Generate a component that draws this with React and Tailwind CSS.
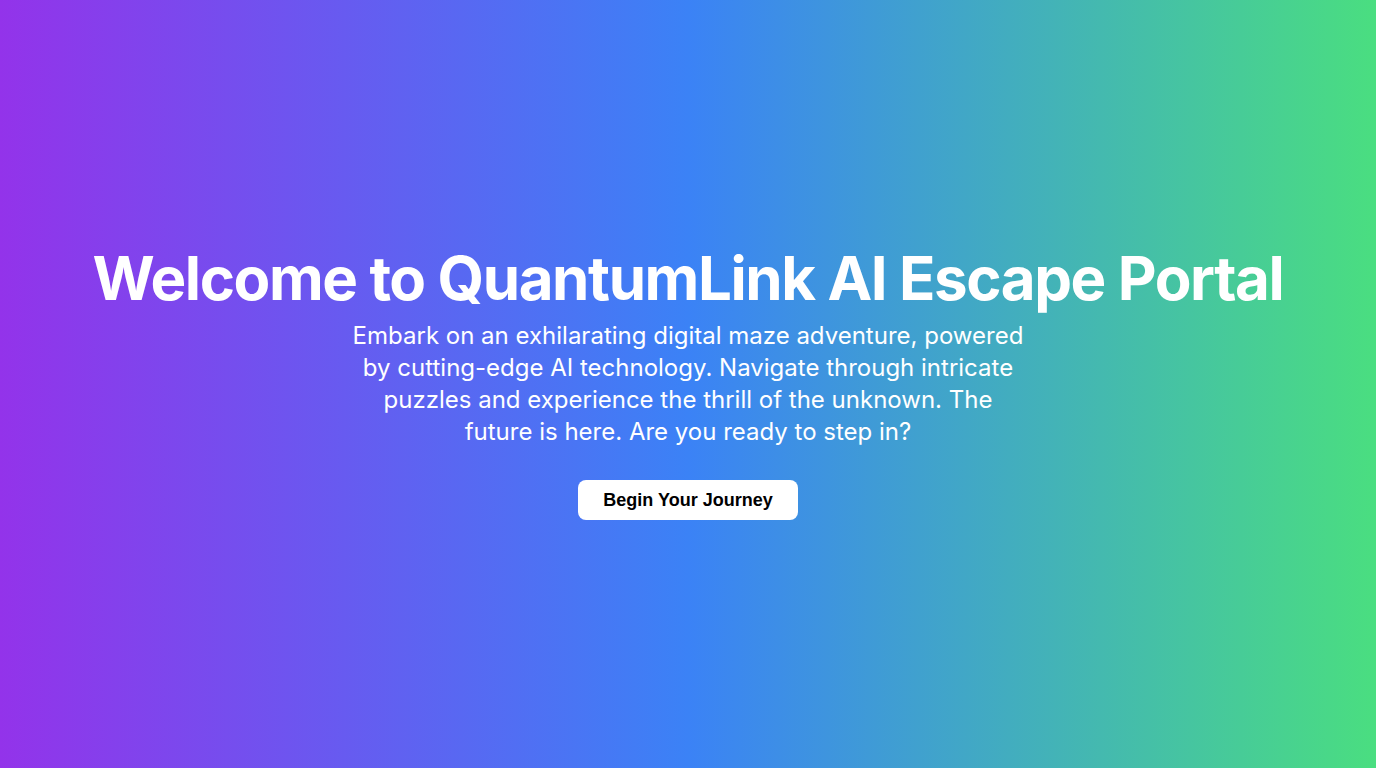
export default function App() {
  return (
    <div className="min-h-screen w-full flex flex-col items-center justify-center bg-[linear-gradient(to_right,#9333ea,#3b82f6,#4ade80)] text-white text-center font-['Inter',sans-serif]">
      <h1 className="text-6xl leading-[60px] font-bold tracking-[-0.0235em] mb-3">
        Welcome to QuantumLink AI Escape Portal
      </h1>
      <p className="text-2xl leading-8 max-w-2xl">
        Embark on an exhilarating digital maze adventure, powered by cutting-edge AI technology. Navigate through intricate puzzles and experience the thrill of the unknown. The future is here. Are you ready to step in?
      </p>
      <button className="mt-8 bg-white text-black rounded-lg px-[25px] py-2 text-lg leading-6 font-bold font-['Liberation_Sans',Arial,sans-serif]">
        Begin Your Journey
      </button>
    </div>
  );
}
